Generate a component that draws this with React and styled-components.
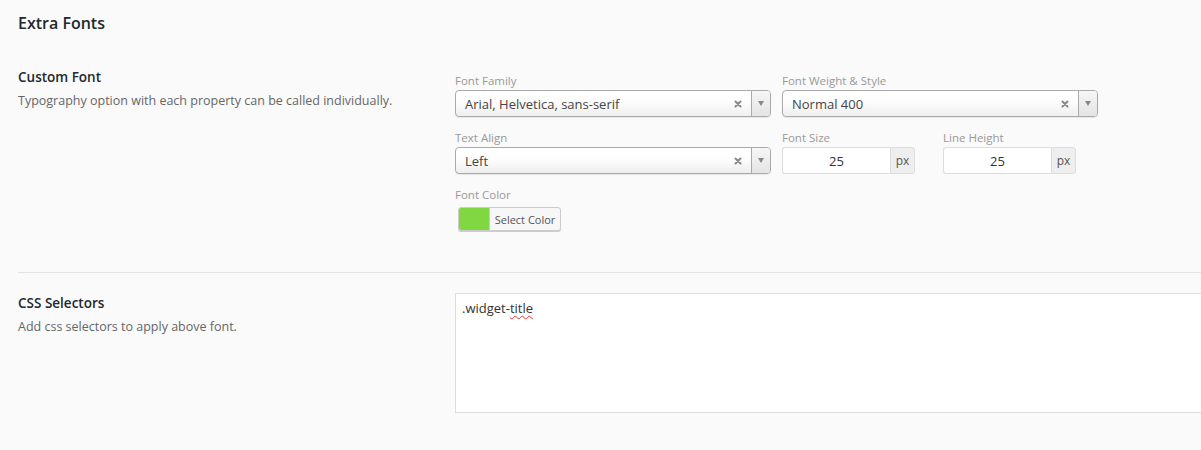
import styled, { createGlobalStyle } from "styled-components";

const Global = createGlobalStyle`
  html, body {
    margin: 0;
    background: #fafafa;
    font-family: "Open Sans", "Noto Sans", sans-serif;
    color: #23282d;
    overflow: hidden;
  }
`;

const Page = styled.div`
  width: 1201px;
  height: 450px;
  padding-left: 18px;
  box-sizing: border-box;
  overflow: hidden;
`;

const Heading = styled.h2`
  margin: 0;
  padding: 13px 0 17px;
  font-size: 16px;
  line-height: 20px;
  font-weight: 600;
  color: #23282d;
`;

const Section = styled.section`
  display: grid;
  grid-template-columns: 437px 1fr;
  padding: ${(p) => p.$pad};
  border-bottom: ${(p) => (p.$divider ? "1px solid #e3e3e3" : "none")};
`;

const Info = styled.div`
  display: flex;
  flex-direction: column;
`;

const Title = styled.h3`
  margin: 0;
  font-size: 13.5px;
  line-height: 20px;
  font-weight: 600;
  color: #23282d;
`;

const Desc = styled.p`
  margin: 5px 0 0;
  font-size: 12.5px;
  line-height: 18px;
  color: #666;
`;

const Controls = styled.div`
  display: flex;
  flex-direction: column;
  gap: 13px;
  padding-top: ${(p) => p.$top || 0}px;
`;

const Row = styled.div`
  display: flex;
  gap: 11px;
`;

const Field = styled.div`
  width: ${(p) => p.$w}px;
  margin-left: ${(p) => p.$ml || 0}px;
  display: flex;
  flex-direction: column;
`;

const Label = styled.label`
  font-size: 11.5px;
  line-height: 16px;
  color: #999;
  margin-bottom: 1px;
`;

const Select = styled.div`
  height: 27px;
  box-sizing: border-box;
  border: 1px solid #aaa;
  border-radius: 4px;
  background: linear-gradient(#fff 0%, #fdfdfd 45%, #eee 100%);
  box-shadow: 0 1px 1px rgba(0, 0, 0, 0.08);
  display: flex;
  align-items: center;
  overflow: hidden;
`;

const SelectValue = styled.span`
  flex: 1;
  padding-left: 9px;
  font-size: 13px;
  color: #444;
  white-space: nowrap;
`;

const Clear = styled.span`
  width: 12px;
  margin-right: 7px;
  display: flex;
  justify-content: center;
`;

const Arrow = styled.span`
  width: 18px;
  align-self: stretch;
  border-left: 1px solid #aaa;
  background: linear-gradient(#f6f6f6, #e4e4e4);
  display: flex;
  align-items: center;
  justify-content: center;
  &::after {
    content: "";
    border-left: 3px solid transparent;
    border-right: 3px solid transparent;
    border-top: 5px solid #888;
  }
`;

const InputGroup = styled.div`
  display: flex;
  height: 27px;
`;

const NumInput = styled.div`
  flex: 1;
  box-sizing: border-box;
  background: #fff;
  border: 1px solid #ddd;
  border-right: none;
  border-radius: 3px 0 0 3px;
  display: flex;
  align-items: center;
  justify-content: center;
  font-size: 13px;
  color: #333;
`;

const Addon = styled.span`
  width: 25px;
  box-sizing: border-box;
  background: #eee;
  border: 1px solid #ddd;
  border-radius: 0 3px 3px 0;
  display: flex;
  align-items: center;
  justify-content: center;
  font-size: 12px;
  color: #555;
`;

const ColorButton = styled.div`
  margin-top: 3px;
  margin-left: 3px;
  width: 103px;
  height: 24px;
  box-sizing: border-box;
  border: 1px solid #ccc;
  border-radius: 3px;
  background: #f7f7f7;
  display: flex;
  overflow: hidden;
  box-shadow: 0 1px 0 #ccc;
`;

const Swatch = styled.span`
  width: 30px;
  background: ${(p) => p.$color};
  border-right: 1px solid #ccc;
`;

const ColorText = styled.span`
  flex: 1;
  display: flex;
  align-items: center;
  justify-content: center;
  font-size: 11px;
  color: #555;
`;

const TextBox = styled.div`
  width: 800px;
  height: 120px;
  box-sizing: border-box;
  background: #fff;
  border: 1px solid #ddd;
  padding: 5px 6px;
  font-size: 13px;
  line-height: 18px;
  color: #333;
`;

const Misspelled = styled.span`
  text-decoration: underline wavy #e33;
  text-decoration-thickness: 1px;
  text-underline-offset: 2px;
`;

const ClearIcon = () => (
  <svg width="8" height="8" viewBox="0 0 8 8">
    <path d="M1.5 1.5 L6.5 6.5 M6.5 1.5 L1.5 6.5" stroke="#888" strokeWidth="2" strokeLinecap="round" />
  </svg>
);

const ChosenSelect = ({ value }) => (
  <Select>
    <SelectValue>{value}</SelectValue>
    <Clear>
      <ClearIcon />
    </Clear>
    <Arrow />
  </Select>
);

const PxInput = ({ value }) => (
  <InputGroup>
    <NumInput>{value}</NumInput>
    <Addon>px</Addon>
  </InputGroup>
);

const App = () => {
  return (
    <Page>
      <Global />
      <Heading>Extra Fonts</Heading>

      <Section $pad="17px 0 41px" $divider>
        <Info>
          <Title>Custom Font</Title>
          <Desc>Typography option with each property can be called individually.</Desc>
        </Info>
        <Controls $top={6}>
          <Row>
            <Field $w={316}>
              <Label>Font Family</Label>
              <ChosenSelect value="Arial, Helvetica, sans-serif" />
            </Field>
            <Field $w={316}>
              <Label>Font Weight &amp; Style</Label>
              <ChosenSelect value="Normal 400" />
            </Field>
          </Row>
          <Row>
            <Field $w={316}>
              <Label>Text Align</Label>
              <ChosenSelect value="Left" />
            </Field>
            <Field $w={133}>
              <Label>Font Size</Label>
              <PxInput value="25" />
            </Field>
            <Field $w={133} $ml={17}>
              <Label>Line Height</Label>
              <PxInput value="25" />
            </Field>
          </Row>
          <Row>
            <Field $w={200}>
              <Label>Font Color</Label>
              <ColorButton>
                <Swatch $color="#81d742" />
                <ColorText>Select Color</ColorText>
              </ColorButton>
            </Field>
          </Row>
        </Controls>
      </Section>

      <Section $pad="20px 0 0">
        <Info>
          <Title>CSS Selectors</Title>
          <Desc>Add css selectors to apply above font.</Desc>
        </Info>
        <Controls>
          <TextBox>
            .widget-<Misspelled>title</Misspelled>
          </TextBox>
        </Controls>
      </Section>
    </Page>
  );
};

export default App;
